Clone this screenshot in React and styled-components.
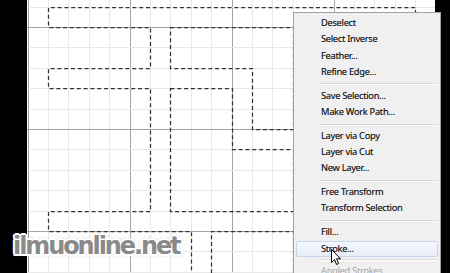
import React from 'react';
import styled, { createGlobalStyle } from 'styled-components';

const Global = createGlobalStyle`
  html, body { margin: 0; padding: 0; background: #000; }
  body { width: 450px; height: 273px; overflow: hidden; font-family: "Noto Sans", "Liberation Sans", sans-serif; }
  #root { width: 450px; height: 273px; }
`;

const Screen = styled.div`
  position: relative;
  display: flex;
  width: 450px;
  height: 273px;
  background: #000;
  overflow: hidden;
`;

const SideBar = styled.div`
  flex: 0 0 ${p => p.$w}px;
  background: #000;
`;

const Canvas = styled.div`
  flex: 0 0 408px;
  height: 273px;
  background: #fff;
  svg { display: block; }
`;

const Menu = styled.div`
  position: absolute;
  left: 293px;
  top: 12px;
  width: 148px;
  height: 280px;
  box-sizing: border-box;
  padding: 2px 0;
  background: #f0f0f0;
  border: 1px solid #a0a0a0;
  display: flex;
  flex-direction: column;
`;

const Item = styled.div`
  box-sizing: border-box;
  height: 16.3px;
  flex: 0 0 16.3px;
  margin: 0 2px;
  padding-left: 24px;
  font-size: 9.3px;
  letter-spacing: -0.3px;
  line-height: 14.8px;
  color: ${p => (p.$disabled ? '#a8a8a8' : '#1a1a1a')};
  text-shadow: ${p => (p.$disabled ? 'none' : '0 0 0.4px rgba(0,0,0,0.5)')};
  border: 1px solid ${p => (p.$hover ? '#c6d7ec' : 'transparent')};
  border-radius: 2px;
  background: ${p => (p.$hover ? 'linear-gradient(#f4f7fc, #e8eef8)' : 'transparent')};
  white-space: nowrap;
`;

const Separator = styled.div`
  flex: 0 0 ${p => (p.$tight ? 6 : 7.5)}px;
  height: ${p => (p.$tight ? 6 : 7.5)}px;
  display: flex;
  align-items: center;
  padding-left: 25px;
  padding-right: 2px;
  &::after {
    content: '';
    flex: 1;
    height: 1px;
    background: #dadada;
    box-shadow: 0 1px 0 #fff;
  }
`;

const Watermark = styled.div`
  position: absolute;
  left: 13px;
  top: 232px;
  font-family: "DejaVu Sans", sans-serif;
  font-weight: bold;
  font-size: 24px;
  letter-spacing: -2.1px;
  color: #8a8a8a;
  text-shadow:
    2px 0 0 #fff, -2px 0 0 #fff, 0 2px 0 #fff, 0 -2px 0 #fff,
    1.5px 1.5px 0 #fff, -1.5px -1.5px 0 #fff, 1.5px -1.5px 0 #fff, -1.5px 1.5px 0 #fff,
    0 0 4px rgba(110,110,110,0.7);
  white-space: nowrap;
  pointer-events: none;
`;

const Cursor = styled.svg`
  position: absolute;
  left: 331px;
  top: 249px;
`;

const OX = 27;
const gx = k => Math.round(27.5 + 20.4 * k) + 0.5 - OX;
const gy = j => Math.round(6.6 + 20.4 * j) + 0.5;

const pts = arr => arr.map(([k, j]) => `${gx(k)},${gy(j)}`).join(' ');

function Grid() {
  const lines = [];
  for (let k = 0; k <= 20; k++) {
    const x = gx(k);
    lines.push(
      <line key={'v' + k} x1={x} y1={0} x2={x} y2={273} stroke={k % 5 === 0 ? '#a4a4a4' : '#e8e8e8'} strokeWidth="1" />
    );
  }
  for (let j = -1; j <= 13; j++) {
    const y = gy(j);
    lines.push(
      <line key={'h' + j} x1={0} y1={y} x2={408} y2={y} stroke={(j - 1) % 5 === 0 ? '#a4a4a4' : '#e8e8e8'} strokeWidth="1" />
    );
  }
  const ant = { fill: 'none', stroke: '#333', strokeWidth: 1.25, strokeDasharray: '4 2.8' };
  return (
    <svg width="408" height="273" viewBox="0 0 408 273">
      {lines}
      <polyline {...ant} points={`${gx(19)},14 ` + pts([[19, 0], [1, 0], [1, 1], [6, 1], [6, 3], [1, 3], [1, 4], [6, 4], [6, 10], [1, 10], [1, 11], [8, 11]]) + ` ${gx(8)},280`} />
      <polygon {...ant} points={pts([[7, 1], [13, 1], [13, 6], [11, 6], [11, 3], [7, 3]])} />
      <polygon {...ant} points={pts([[7, 4], [10, 4], [10, 7], [13, 7], [13, 10], [7, 10]])} />
      <polyline {...ant} points={`${gx(9)},280 ` + pts([[9, 11], [13, 11]]) + ` ${gx(13)},280`} />
    </svg>
  );
}

const groups = [
  ['Deselect', 'Select Inverse', 'Feather...', 'Refine Edge...'],
  ['Save Selection...', 'Make Work Path...'],
  ['Layer via Copy', 'Layer via Cut', 'New Layer...'],
  ['Free Transform', 'Transform Selection'],
  ['Fill...', 'Stroke...'],
  ['Angled Strokes'],
];

export default function App() {
  return (
    <>
      <Global />
      <Screen>
        <SideBar $w={27} />
        <Canvas>
          <Grid />
        </Canvas>
        <SideBar $w={15} />
        <Menu>
          {groups.map((g, gi) => (
            <React.Fragment key={gi}>
              {gi > 0 && <Separator $tight={gi === groups.length - 1} />}
              {g.map(label => (
                <Item key={label} $hover={label === 'Stroke...'} $disabled={label === 'Angled Strokes'}>
                  {label}
                </Item>
              ))}
            </React.Fragment>
          ))}
        </Menu>
        <Watermark>ilmuonline.net</Watermark>
        <Cursor width="11" height="17" viewBox="0 0 11 17">
          <path d="M0.5 0.5 L0.5 13.5 L3.5 10.5 L5.6 15.5 L7.6 14.6 L5.6 9.8 L9.6 9.8 Z" fill="#fff" stroke="#000" strokeWidth="1" strokeLinejoin="round" />
        </Cursor>
      </Screen>
    </>
  );
}
